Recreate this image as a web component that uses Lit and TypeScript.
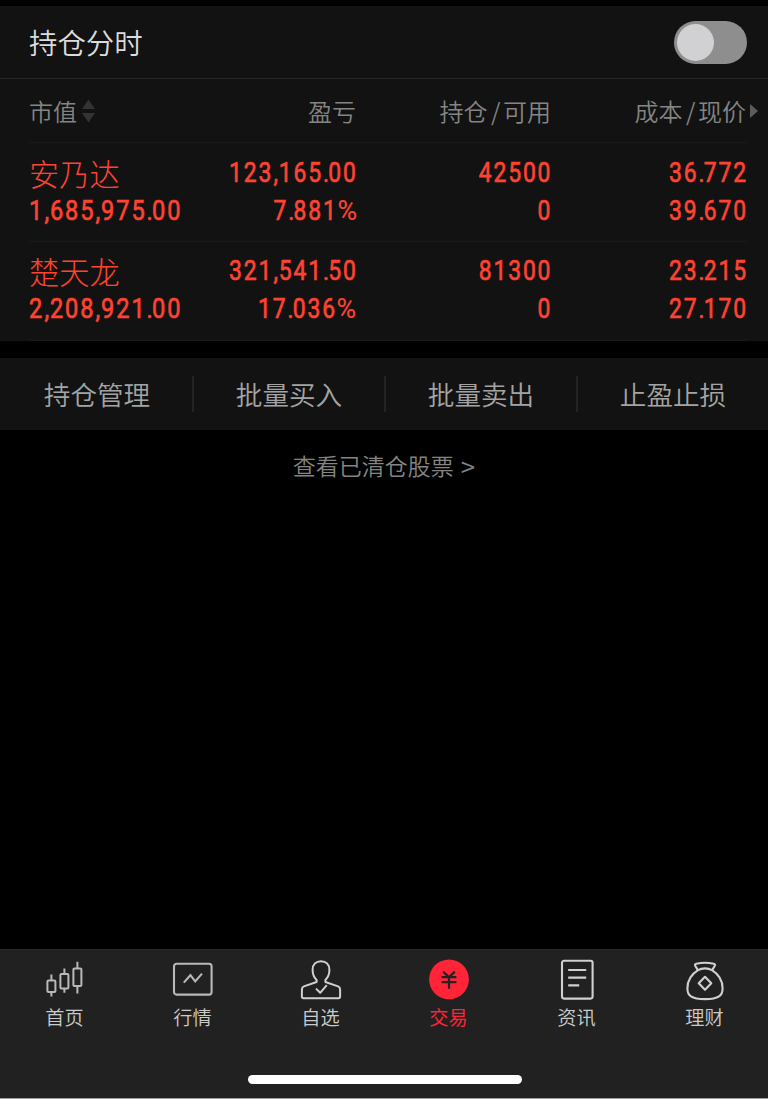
import { LitElement, html, css, svg } from "lit";
import { customElement, property } from "lit/decorators.js";

interface Holding {
  name: string;
  value: string;
  profit: string;
  rate: string;
  amount: string;
  usable: string;
  cost: string;
  price: string;
}

const HOLDINGS: Holding[] = [
  { name: "安乃达", value: "1,685,975.00", profit: "123,165.00", rate: "7.881%", amount: "42500", usable: "0", cost: "36.772", price: "39.670" },
  { name: "楚天龙", value: "2,208,921.00", profit: "321,541.50", rate: "17.036%", amount: "81300", usable: "0", cost: "23.215", price: "27.170" },
];

const ACTIONS = ["持仓管理", "批量买入", "批量卖出", "止盈止损"];

const ICONS = {
  home: svg`<g stroke="#b9b9b9" stroke-width="2">
    <rect x="3.400" y="21.400" width="8" height="11.600" rx="1"/><path d="M7.400 15.500v5.900M7.400 33v4.600"/>
    <rect x="16.400" y="15" width="8" height="14.400" rx="1"/><path d="M20.400 9.500V15M20.400 29.400v4.400"/>
    <rect x="29.400" y="9.400" width="8" height="17.600" rx="1"/><path d="M33.400 2.800v6.600M33.400 27v7.400"/></g>`,
  market: svg`<g stroke="#b9b9b9" stroke-width="2.100">
    <rect x="2" y="4.800" width="37.600" height="30.800" rx="2.600"/>
    <path d="M11.800 23.600l6.600-7.400 4.800 6.200 6.800-7.800"/></g>`,
  self: svg`<g stroke="#d0d0d0" stroke-width="2" stroke-linejoin="round">
    <path d="M16.600 21c-2.800-2.600-4-6.200-4-10.200C12.600 5.600 16 2.200 21 2.200s8.400 3.400 8.400 8.600c0 4-1.200 7.600-4 10.200v2l12.700 4.400q2 .8 2 3v7.200q0 1.700-1.700 1.700H3.600q-1.700 0-1.700-1.700v-7.200q0-2.200 2-3L16.600 23z"/>
    <path d="M16 29.600l4.200 4.200 6.600-7.600"/></g>`,
  trade: svg`<circle cx="21" cy="20.400" r="19.900" fill="#ff2438"/>
    <g stroke="#212121" stroke-width="2.200"><path d="M15.200 12.600l5.800 5.600 5.800-5.600M13.600 18.200h14.800M13.600 23.200h14.800M21 18v11.800"/></g>`,
  news: svg`<g stroke="#d0d0d0" stroke-width="2.100">
    <rect x="6" y="1.800" width="30.600" height="37.800" rx="2"/>
    <path d="M12.200 11h18M12.200 18.600h18M12.200 26.400h11"/></g>`,
  wealth: svg`<g stroke="#d0d0d0" stroke-width="2.100" stroke-linejoin="round">
    <path d="M14 11.400c-.8-1.800-1.900-3.200-2.700-4.400-.7-1.100-.3-1.900 1-2.200 5.400-1.300 12-1.300 17.400 0 1.300.3 1.700 1.100 1 2.200-.8 1.200-1.900 2.600-2.700 4.400"/>
    <path d="M14 11.200c4-2.400 10-2.400 14 0 6.400 4 10.600 11 10.600 18.200 0 7-3.600 10.700-17.600 10.700S3.400 36.400 3.400 29.400C3.400 22.200 7.600 15.200 14 11.200z"/>
    <path d="M21 17.800l6.300 6.500-6.300 6.500-6.300-6.500z"/></g>`,
};

const TABS = [
  { label: "首页", icon: ICONS.home },
  { label: "行情", icon: ICONS.market },
  { label: "自选", icon: ICONS.self },
  { label: "交易", icon: ICONS.trade, active: true },
  { label: "资讯", icon: ICONS.news },
  { label: "理财", icon: ICONS.wealth },
];

@customElement("din-number")
export class DinNumber extends LitElement {
  @property() value = "";

  static styles = css`
    :host { display: block; height: 38px; }
    .num {
      display: inline-block;
      font: 400 28.4px/37px Roboto, "Liberation Sans", sans-serif;
      letter-spacing: 2.3px;
      margin-right: -1.6px;
      white-space: nowrap;
      -webkit-text-stroke: 0.7px currentColor;
      transform: scaleX(var(--squeeze, 0.805));
      transform-origin: var(--edge, right) center;
    }
    .dot { letter-spacing: -0.9px; }
    .comma { letter-spacing: 1px; margin-left: 0.3px; }
    .percent {
      display: inline-block;
      margin-left: 3px;
      letter-spacing: 0;
      -webkit-text-stroke: 0.2px currentColor;
      transform: scaleX(1.17);
      transform-origin: right center;
      margin-right: 1.6px;
    }
  `;

  render() {
    return html`<span class="num">${[...this.value].map((c) =>
      c === "." ? html`<span class="dot">.</span>`
      : c === "," ? html`<span class="comma">,</span>`
      : c === "%" ? html`<span class="percent">%</span>`
      : c)}</span>`;
  }
}

@customElement("app-root")
export class AppRoot extends LitElement {
  static styles = css`
    :host {
      display: flex;
      flex-direction: column;
      box-sizing: border-box;
      height: 1099px;
      padding-top: 6px;
      background: #000;
      overflow: hidden;
      font-family: "Noto Sans CJK SC", sans-serif;
      font-weight: 350;
      color: #858585;
    }
    .title {
      display: flex;
      align-items: center;
      justify-content: space-between;
      height: 72px;
      padding: 0 21px 0 29px;
      background: #121212;
      border-bottom: 1px solid #262626;
      font-size: 28.4px;
      color: #dcdcdc;
    }
    .title > span { padding-bottom: 2px; }
    .switch {
      box-sizing: border-box;
      width: 73px;
      height: 43px;
      padding: 3px;
      border-radius: 22px;
      background: #8e8e8e;
    }
    .knob { width: 37px; height: 37px; border-radius: 50%; background: #d1d1d3; }
    .table { height: 262px; padding: 0 21px 0 29px; background: #121212; }
    .line {
      display: grid;
      grid-template-columns: 160px 167px 195px 195px;
      border-bottom: 1px solid #1a1a1a;
      text-align: right;
    }
    .line > :first-child { text-align: left; --edge: left; --squeeze: 0.83; }
    .head { height: 63px; align-items: center; font-size: 24px; }
    .sort { display: flex; align-items: center; gap: 5px; }
    .last { display: flex; align-items: center; justify-content: flex-end; gap: 4px; margin-right: -12px; }
    .slash { margin: 0 2.5px 0 3.5px; }
    .row { height: 87.5px; padding-top: 10.5px; color: #ff4331; }
    .row + .row { height: 88.5px; padding-top: 9.5px; }
    .name { height: 38px; font-size: 30.2px; line-height: 38px; font-weight: 300; }
    .actions {
      display: grid;
      grid-template-columns: repeat(4, 1fr);
      align-items: center;
      height: 72px;
      margin-top: 17px;
      background: #121212;
      font-size: 26.6px;
      color: #a4a4a4;
    }
    .action { height: 36px; line-height: 36px; text-align: center; box-sizing: border-box; padding-left: 2px; }
    .action + .action { border-left: 2px solid #232323; padding-left: 0; }
    .cleared {
      display: flex;
      justify-content: center;
      gap: 7px;
      margin-top: 17px;
      line-height: 36px;
      font-size: 23px;
    }
    .more { font-size: 26px; line-height: 37px; }
    .tabbar {
      box-sizing: border-box;
      height: 150px;
      margin-top: auto;
      background: #212121;
      border-top: 1px solid #2a2a2a;
      border-bottom: 1px solid #a0a0a0;
    }
    .tabs { display: grid; grid-template-columns: repeat(6, 1fr); height: 129px; padding-left: 1px; margin-right: -1px; }
    .tab { display: flex; flex-direction: column; align-items: center; padding-top: 9px; color: #ccc; }
    .icon { display: block; width: 42px; height: 42px; fill: none; }
    .label { font-size: 19.2px; line-height: 32px; padding-right: 1px; }
    .active { color: #ff2438; font-weight: 400; }
    .indicator { width: 274px; height: 9px; margin: -4px auto 0; border-radius: 5px; background: #fff; position: relative; left: 1px; }
  `;

  render() {
    return html`
      <div class="title"><span>持仓分时</span><div class="switch"><div class="knob"></div></div></div>
      <div class="table">
        <div class="line head">
          <span class="sort">市值<svg width="13" height="24" fill="#333"><path d="M6.500 0.500L13 10H0zM0 14h13L6.500 23.500z"/></svg></span>
          <span>盈亏</span>
          <span>持仓<span class="slash">/</span>可用</span>
          <span class="last"><span>成本<span class="slash">/</span>现价</span><svg width="8" height="14" fill="#5c5c5c"><path d="M0 0l8 7-8 7z"/></svg></span>
        </div>
        ${HOLDINGS.map((h) => html`
          <div class="line row">
            <div><div class="name">${h.name}</div><din-number .value=${h.value}></din-number></div>
            <div><din-number .value=${h.profit}></din-number><din-number .value=${h.rate}></din-number></div>
            <div><din-number .value=${h.amount}></din-number><din-number .value=${h.usable}></din-number></div>
            <div><din-number .value=${h.cost}></din-number><din-number .value=${h.price}></din-number></div>
          </div>`)}
      </div>
      <div class="actions">${ACTIONS.map((a) => html`<div class="action">${a}</div>`)}</div>
      <div class="cleared"><span>查看已清仓股票</span><span class="more">&gt;</span></div>
      <div class="tabbar">
        <div class="tabs">${TABS.map((t) => html`
          <div class="tab ${t.active ? "active" : ""}">
            <svg class="icon" viewBox="0 0 42 42">${t.icon}</svg>
            <span class="label">${t.label}</span>
          </div>`)}</div>
        <div class="indicator"></div>
      </div>`;
  }
}
